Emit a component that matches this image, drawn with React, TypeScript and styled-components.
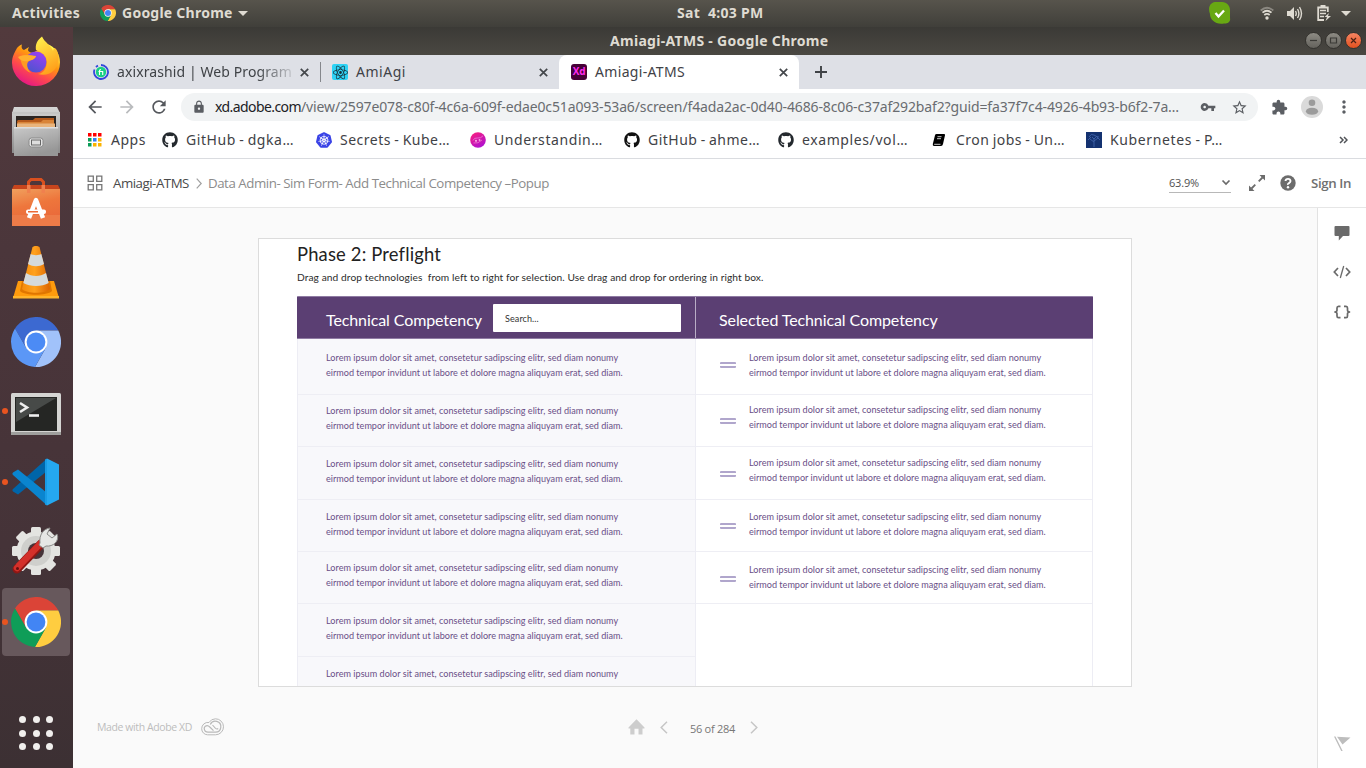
import React from "react";
import styled, { createGlobalStyle } from "styled-components";
import { FaGithub } from "react-icons/fa";
import { SiKubernetes, SiReact } from "react-icons/si";
import {
  MdArrowBack,
  MdArrowForward,
  MdRefresh,
  MdLock,
  MdVpnKey,
  MdStarBorder,
  MdExtension,
  MdMoreVert,
} from "react-icons/md";

const UI = `"Noto Sans", "Open Sans", sans-serif`;
const ADOBE = `"Open Sans", "Noto Sans", sans-serif`;
const NUNITO = `Lato, "Open Sans", sans-serif`;

const GlobalStyle = createGlobalStyle`
  * { box-sizing: border-box; }
  body { margin: 0; font-family: ${UI}; background: #fafafa; }
  svg { display: block; flex: none; }
`;

const Screen = styled.div`
  width: 1366px;
  height: 768px;
  display: flex;
  flex-direction: column;
  overflow: hidden;
`;

/* ---------- desktop top bar ---------- */
const TopBar = styled.header`
  height: 27px;
  flex: none;
  display: grid;
  grid-template-columns: 677px 1fr auto;
  align-items: center;
  padding: 0 15px 1px 0;
  background: linear-gradient(#57544c, #403f3a);
  color: #dfdbd2;
  font-size: 14px;
  line-height: 26px;
  white-space: pre;
`;
const TopLeft = styled.div`
  display: flex;
  align-items: center;
  padding-left: 12px;
`;
const TopText = styled.span<{ $ls: number; $gap?: number }>`
  letter-spacing: ${(p) => p.$ls}px;
  margin-left: ${(p) => p.$gap ?? 0}px;
  font-weight: 700;
`;
const AppMenuIcon = styled.span`
  margin-left: 20px;
`;
const Caret = styled.span<{ $gap: number }>`
  margin-left: ${(p) => p.$gap}px;
  border: 5px solid transparent;
  border-top: 5px solid #dfdbd2;
  border-bottom: 0;
`;
const Tray = styled.div`
  display: flex;
  align-items: center;
`;
const TrayIcon = styled.span<{ $gap: number }>`
  margin-left: ${(p) => p.$gap}px;
`;

/* ---------- dock ---------- */
const Below = styled.div`
  flex: 1;
  display: flex;
  min-height: 0;
`;
const Dock = styled.nav`
  width: 73px;
  flex: none;
  display: flex;
  flex-direction: column;
  align-items: center;
  padding-right: 1px;
  background: linear-gradient(#523a3d 0, #4b363b 30%, #453338 70%, #3c3033 100%);
`;
const DockItem = styled.div<{ $active?: boolean; $running?: boolean; $pt?: number; $pb?: number }>`
  width: 68px;
  height: 68px;
  margin-bottom: 2.1px;
  padding: ${(p) => p.$pt ?? 0}px 0 ${(p) => p.$pb ?? 0}px;
  flex: none;
  display: flex;
  align-items: center;
  justify-content: center;
  border-radius: 4px;
  position: relative;
  background: ${(p) => (p.$active ? "#67585c" : "transparent")};
  &::before {
    content: "";
    display: ${(p) => (p.$running ? "block" : "none")};
    position: absolute;
    left: 0;
    top: 31px;
    width: 6px;
    height: 6px;
    border-radius: 50%;
    background: #e95420;
  }
`;
const AppGrid = styled.div`
  margin: auto 0 18px;
  display: grid;
  grid-template-columns: repeat(3, 7px);
  gap: 6.5px;
`;
const AppGridDot = styled.i`
  height: 7px;
  border-radius: 50%;
  background: #f1efed;
`;

/* ---------- browser window ---------- */
const Browser = styled.main`
  flex: 1;
  min-width: 0;
  display: flex;
  flex-direction: column;
`;
const TitleBar = styled.div`
  height: 28px;
  flex: none;
  display: grid;
  grid-template-columns: 537px 1fr auto;
  align-items: center;
  padding: 0 4px 1px 0;
  background: linear-gradient(#3b3a36, #4a4842);
  color: #dfdbd2;
  font-size: 14px;
  font-weight: 700;
  letter-spacing: 0.3px;
`;
const WindowButtons = styled.div`
  display: flex;
  gap: 3px;
`;
const WindowButton = styled.span<{ $close?: boolean }>`
  width: 17px;
  height: 17px;
  border-radius: 50%;
  display: flex;
  align-items: center;
  justify-content: center;
  border: 1px solid #33322e;
  background: ${(p) =>
    p.$close ? "linear-gradient(#f58462, #e2511f)" : "linear-gradient(#8d8b84, #64625c)"};
`;
const TabStrip = styled.div`
  height: 34px;
  flex: none;
  display: flex;
  background: #dee0e6;
  color: #3f4246;
  font-size: 14px;
`;
const Tab = styled.div<{ $w: number; $pl: number; $active?: boolean }>`
  width: ${(p) => p.$w}px;
  padding: 0 11px 0 ${(p) => p.$pl}px;
  display: flex;
  align-items: center;
  gap: 8px;
  background: ${(p) => (p.$active ? "#fff" : "transparent")};
  border-radius: 8px 8px 0 0;
`;
const TabTitle = styled.span<{ $ls: number; $fade?: boolean }>`
  flex: 1;
  padding-bottom: 2px;
  white-space: nowrap;
  letter-spacing: ${(p) => p.$ls}px;
  mask-image: ${(p) =>
    p.$fade ? "linear-gradient(90deg, #000 140px, rgba(0,0,0,.15) 176px)" : "none"};
`;
const TabDivider = styled.i`
  width: 1px;
  height: 20px;
  align-self: center;
  background: #85878c;
`;
const NewTab = styled.div`
  padding: 11px 0 0 16px;
`;

const Toolbar = styled.div`
  height: 36px;
  flex: none;
  display: flex;
  align-items: center;
  padding: 0 0 0 12px;
  background: #fff;
  color: #5b5e63;
`;
const NavIcon = styled.span<{ $dim?: boolean }>`
  font-size: 20px;
  margin-right: 12px;
  color: ${(p) => (p.$dim ? "#b9bbbd" : "#55585d")};
`;
const AddressBar = styled.div`
  width: 1077px;
  height: 28px;
  border-radius: 14px;
  display: flex;
  align-items: center;
  padding: 0 10px 0 11px;
  background: #f1f3f4;
  font-size: 14px;
  white-space: nowrap;
`;
const UrlHost = styled.span`
  margin-left: 9px;
  width: 86px;
  color: #202124;
  letter-spacing: -0.58px;
  padding-bottom: 1px;
`;
const UrlPath = styled.span`
  flex: 1;
  color: #696c70;
  letter-spacing: -0.133px;
  padding-bottom: 1px;
`;
const AddressIcon = styled.span<{ $size: number; $gap: number }>`
  font-size: ${(p) => p.$size}px;
  margin-left: ${(p) => p.$gap}px;
  color: #5b5e63;
`;

const Bookmarks = styled.div`
  height: 34px;
  flex: none;
  display: flex;
  align-items: center;
  padding: 0 18px 4px 15px;
  background: #fff;
  border-bottom: 1px solid #dadce0;
  color: #3f4246;
  font-size: 14px;
  white-space: nowrap;
`;
const AppsLink = styled.div`
  width: 74px;
  display: flex;
  align-items: center;
  gap: 9px;
  letter-spacing: 0.5px;
`;
const Bookmark = styled.div<{ $ls: number }>`
  width: 154px;
  display: flex;
  align-items: center;
  gap: 8px;
  letter-spacing: ${(p) => p.$ls}px;
  word-spacing: -0.8px;
`;
const Favicon = styled.span<{ $c: string }>`
  width: 16px;
  font-size: 16px;
  color: ${(p) => p.$c};
`;
const More = styled.span`
  margin-left: auto;
`;

/* ---------- prototype viewer ---------- */
const ViewerBar = styled.div`
  height: 49px;
  flex: none;
  display: flex;
  align-items: center;
  padding: 0 15px 0 14px;
  background: #fff;
  border-bottom: 1px solid #e6e6e6;
  font-family: ${ADOBE};
  font-size: 13.3px;
  white-space: nowrap;
`;
const Project = styled.span`
  margin: 0 7px 0 10px;
  width: 76px;
  color: #4a4a4a;
  letter-spacing: -0.49px;
`;
const ScreenName = styled.span`
  margin-left: 6px;
  flex: 1;
  color: #8c8c8c;
  letter-spacing: -0.46px;
`;
const ZoomSelect = styled.div`
  width: 62px;
  height: 19px;
  margin-right: 18px;
  display: flex;
  align-items: center;
  justify-content: space-between;
  border-bottom: 1px solid #b8b8b8;
  color: #505050;
  font-size: 11px;
  letter-spacing: -0.17px;
`;
const SignIn = styled.span`
  margin-left: 15px;
  width: 40px;
  color: #707070;
  font-weight: 600;
  letter-spacing: -0.4px;
`;
const HelpIcon = styled.span`
  margin-left: 15px;
`;
const Viewer = styled.div`
  flex: 1;
  display: flex;
  min-height: 0;
`;
const Stage = styled.section`
  flex: 1;
  display: flex;
  flex-direction: column;
  padding: 30px 0 0 185px;
  background: #fafafa;
`;
const SideRail = styled.aside`
  width: 49px;
  display: flex;
  flex-direction: column;
  align-items: center;
  padding: 17px 0 16px;
  border-left: 1px solid #e2e2e2;
  background: #fff;
`;
const RailIcon = styled.div<{ $gap: number }>`
  margin-top: ${(p) => p.$gap}px;
`;
const RailBottom = styled.div`
  margin-top: auto;
`;
const Artboard = styled.div`
  width: 874px;
  height: 449px;
  flex: none;
  overflow: hidden;
  padding: 0 38px;
  border: 1px solid #dcdcdc;
  background: #fff;
  font-family: ${NUNITO};
`;
const Heading = styled.h1`
  margin: 4px 0 0;
  font-weight: 400;
  font-size: 18.4px;
  line-height: 23px;
  letter-spacing: 0.17px;
  color: #222;
`;
const Hint = styled.p`
  margin: 3px 0 0;
  height: 27px;
  font-size: 10.2px;
  line-height: 16px;
  letter-spacing: 0.08px;
  color: #2c2c2c;
  white-space: pre;
`;
const TableHead = styled.div`
  height: 43px;
  display: flex;
  background: #5b3f73;
  border: 1px solid #8f7ba3;
  border-width: 1px 0;
  border-radius: 1px 1px 0 0;
  color: #fff;
  font-size: 16px;
`;
const HeadCell = styled.div<{ $w: number; $pl: number; $divided?: boolean }>`
  width: ${(p) => p.$w}px;
  padding-left: ${(p) => p.$pl}px;
  padding-top: 3px;
  display: flex;
  align-items: center;
  border-right: ${(p) => (p.$divided ? "1px solid #b9adc6" : "0")};
`;
const HeadText = styled.span<{ $ls: number; $w: number }>`
  width: ${(p) => p.$w}px;
  letter-spacing: ${(p) => p.$ls}px;
  white-space: nowrap;
`;
const SearchBox = styled.div`
  width: 188px;
  height: 28px;
  margin: -2px 0 0 10.500px;
  padding-left: 12.500px;
  display: flex;
  align-items: center;
  border-radius: 1px;
  background: #fff;
  color: #333;
  font-size: 9px;
  letter-spacing: 0.1px;
`;
const Columns = styled.div`
  display: flex;
  height: 420px;
`;
const Column = styled.div<{ $w: number; $tinted?: boolean }>`
  width: ${(p) => p.$w}px;
  background: ${(p) => (p.$tinted ? "#f8f8fb" : "#fff")};
  border: solid #ededf4;
  border-width: 0 1px 0 ${(p) => (p.$tinted ? 1 : 0)}px;
`;
const Row = styled.div<{ $h: number; $pt: number; $pl: number }>`
  height: ${(p) => p.$h}px;
  padding: ${(p) => p.$pt}px 0 0 ${(p) => p.$pl}px;
  display: flex;
  border-bottom: 1px solid #eeeef4;
`;
const Lorem = styled.div`
  margin-top: -1px;
  font-size: 9.1px;
  line-height: 15.4px;
  color: #6a4f87;
  white-space: nowrap;
`;
const Line = styled.div<{ $ls: number }>`
  letter-spacing: ${(p) => p.$ls}px;
`;
const Handle = styled.div<{ $top: number }>`
  width: 16px;
  height: 6px;
  margin: ${(p) => p.$top}px 13px 0 0;
  border: solid #b0a6cc;
  border-width: 2px 0;
  border-radius: 1px;
`;
const Footer = styled.footer`
  display: grid;
  grid-template-columns: 531px auto 1fr;
  align-items: center;
  margin: 28px 0 0 -161px;
  height: 24px;
  font-family: ${ADOBE};
  font-size: 11px;
  white-space: nowrap;
`;
const MadeWith = styled.div`
  display: flex;
  align-items: center;
  color: #bdbdbd;
  font-size: 10.5px;
  letter-spacing: -0.4px;
`;
const MadeWithText = styled.span`
  width: 104px;
`;
const Pager = styled.div`
  display: flex;
  align-items: center;
`;
const PageCount = styled.span`
  margin: 2px 15px 0 22px;
  width: 45px;
  color: #777;
  letter-spacing: -0.28px;
`;
const PrevIcon = styled.span`
  margin-left: 15px;
`;

/* ---------- drawings ---------- */
const Wheel = ({ size, colors, gap = 2 }: { size: number; colors: string[]; gap?: number }) => (
  <svg width={size} height={size} viewBox="0 0 50 50">
    <path d="M25 13.6H47.3A25 25 0 0 0 4 11.5L15.1 30.7Z" fill={colors[0]} />
    <path d="M25 13.6H47.3A25 25 0 0 1 24 50L34.9 30.7Z" fill={colors[1]} />
    <path d="M4 11.5A25 25 0 0 0 24 50L34.9 30.7H15.1Z" fill={colors[2]} />
    <circle cx="25" cy="25" r="11.4" fill="#fff" />
    <circle cx="25" cy="25" r={11.4 - gap} fill={colors[3]} />
  </svg>
);
const CHROME = ["#db4437", "#ffcd40", "#0f9d58", "#4285f4"];
const CHROMIUM = ["#3c69d1", "#a1c2fa", "#5b97f6", "#4c8bf5"];

const Firefox = () => (
  <svg width="50" height="50" viewBox="0 0 50 50">
    <defs>
      <linearGradient id="ffBody" x1=".85" y1=".1" x2=".3" y2="1">
        <stop offset="0" stopColor="#fff44f" />
        <stop offset=".35" stopColor="#ff980e" />
        <stop offset=".65" stopColor="#ff4b4b" />
        <stop offset="1" stopColor="#e31587" />
      </linearGradient>
      <linearGradient id="ffGlobe" x1=".7" y1="0" x2=".2" y2="1">
        <stop offset="0" stopColor="#9a3ff5" />
        <stop offset="1" stopColor="#4a55cc" />
      </linearGradient>
      <linearGradient id="ffTail" x1="0" y1="0" x2=".4" y2="1">
        <stop offset="0" stopColor="#fff44f" />
        <stop offset="1" stopColor="#ffa21c" />
      </linearGradient>
    </defs>
    <path d="M6 12C7 11 9 9 11 8.500C10 11 11 13 13 14L18 11C16 15 17 16 22 17L36 8C45 11 49 19 49 26A24 23.500 0 0 1 1 27C1 20 4 16 6 12Z" fill="url(#ffBody)" />
    <path d="M31 0.500C26 4 24 9 25 14C34 16 38 23 35 31C34 35 30 38 27 38C38 41 46 34 47 26C49 20 46 12 43 12L42 15C40 9 34 7 31 .5Z" fill="url(#ffTail)" />
    <circle cx="25" cy="26" r="10.500" fill="url(#ffGlobe)" />
    <path d="M9 21C14 17 20 20 25 20C24 24 19 24 17 26C15 29 17 34 20 37C12 34 10 27 9 21Z" fill="#ff9a22" />
    <path d="M7 21C14 18 21 20 25 20C24 24 19 24 17 25C12 26 9 24 7 21Z" fill="#ffb02e" />
  </svg>
);
const Files = () => (
  <svg width="50" height="52" viewBox="0 0 50 52">
    <defs>
      <linearGradient id="cab" x1="0" y1="0" x2="0" y2="1">
        <stop offset="0" stopColor="#d6d6d6" />
        <stop offset="1" stopColor="#8b8b8b" />
      </linearGradient>
      <linearGradient id="drawer" x1="0" y1="0" x2=".4" y2="1">
        <stop offset="0" stopColor="#c9c9c9" />
        <stop offset="1" stopColor="#979797" />
      </linearGradient>
    </defs>
    <path d="M3 1H46L49 7V47H1V7Z" fill="url(#cab)" />
    <path d="M1 6H49V8H1Z" fill="#c4c4c4" />
    <path d="M5 10H45V24H5Z" fill="#2b2422" />
    <path d="M7 14H22L24 12H43V23H6V15Z" fill="#b65a1c" />
    <path d="M7 16H30L32 14H43V22H6Z" fill="#d98438" />
    <path d="M6 17.500H44V22H6Z" fill="#e9b47c" />
    <path d="M3 21H47V50H3Z" fill="url(#drawer)" />
    <path d="M3 21H47V22.500H3Z" fill="#dedede" />
    <rect x="18" y="32" width="14" height="9" rx="2.500" fill="#e4e4e4" stroke="#8a8a8a" />
    <rect x="20.500" y="34" width="9" height="5" fill="#ddd" stroke="#666" />
  </svg>
);
const Software = () => (
  <svg width="50" height="50" viewBox="0 0 50 50">
    <defs>
      <linearGradient id="bag" x1="0" y1="0" x2=".3" y2="1">
        <stop offset="0" stopColor="#f0a05e" />
        <stop offset=".5" stopColor="#ee763c" />
        <stop offset="1" stopColor="#e9683a" />
      </linearGradient>
    </defs>
    <path d="M3 8H47L49 12H1Z" fill="#c7451d" />
    <path d="M17.500 13V5L20 2.500H30L32.500 5V13" fill="none" stroke="#d9501f" strokeWidth="3" />
    <path d="M1 12H49V49H1Z" fill="url(#bag)" />
    <path d="M1 38H49V49H1Z" fill="#ed7b48" />
    <path d="M16 8H19.500V16H16ZM30.500 8H34V16H30.500Z" fill="#f0804e" />
    <path d="M18 41L25 23L32 41" fill="none" stroke="#fff" strokeWidth="4.500" strokeLinejoin="round" />
    <rect x="15" y="32.500" width="20" height="4.500" rx="2" fill="#fff" />
    <path d="M17 34H27V35.500H17Z" fill="#ed6b35" />
  </svg>
);
const Vlc = () => (
  <svg width="48" height="54" viewBox="0 0 48 54">
    <defs>
      <linearGradient id="cone" x1="0" x2="1">
        <stop offset="0" stopColor="#f48b0c" />
        <stop offset=".45" stopColor="#ffa11e" />
        <stop offset="1" stopColor="#dc6400" />
      </linearGradient>
    </defs>
    <path d="M6 36H42L47 53H1Z" fill="#ff9b0d" />
    <path d="M1 51H47V53.500H1Z" fill="#ffb52b" />
    <path d="M10 36H38L40 46C35 51 13 51 8 46Z" fill="#e07600" />
    <path d="M20.500 2C22 .5 26 .5 27.500 2L38 44C33 49 15 49 10 44Z" fill="url(#cone)" />
    <path d="M18.700 9C21 10.500 27 10.500 29.300 9L32 19C27 22 21 22 16 19Z" fill="#d5dadc" />
    <path d="M14 28C20 32 28 32 34 28L36.700 38C30 42 18 42 11.300 38Z" fill="#d5dadc" />
  </svg>
);
const Terminal = () => (
  <svg width="50" height="44" viewBox="0 0 50 44">
    <rect x="0" y="1" width="50" height="42" rx="1.500" fill="#d5d5d3" />
    <rect x="0" y="40" width="50" height="3" fill="#9f9f9d" />
    <rect x="4" y="5" width="42" height="34" fill="#252624" />
    <path d="M5 6H45L5 30Z" fill="#474a48" />
    <path d="M9 11L16 15.500L9 20" fill="none" stroke="#eee" strokeWidth="2.600" />
    <path d="M18 23.500H28" stroke="#eee" strokeWidth="2.600" />
  </svg>
);
const VsCode = () => (
  <svg width="48" height="48" viewBox="0 0 48 48">
    <path d="M34.500 1V13.500L6 36.500L1 33.500C0 32.500 .5 31.500 1 31Z" fill="#0065a9" />
    <path d="M34.500 47V34.500L6 11.500L1 14.500C0 15.500 .5 16.500 1 17Z" fill="#0a85cf" />
    <path d="M35 .5L47 6.500V41.500L35 47.500Z" fill="#25a8f0" />
    <path d="M33 1.500L35 .5V47.500L33 46.500Z" fill="#189be5" />
  </svg>
);
const Settings = () => (
  <svg width="50" height="50" viewBox="0 0 50 50">
    <g fill="#e4e4e1">
      {[0, 45, 90, 135].map((a) => (
        <rect key={a} x="20" y="1" width="10" height="48" rx="1.500" transform={`rotate(${a} 25 25)`} />
      ))}
      <circle cx="25" cy="25" r="19.500" />
    </g>
    <circle cx="25" cy="25" r="15" fill="#cfcfcc" />
    <circle cx="25" cy="25" r="8" fill="#463439" />
    <path d="M6 43L30 18" stroke="#8f1714" strokeWidth="9" strokeLinecap="round" />
    <path d="M6 42L30 17" stroke="#d3302a" strokeWidth="6.500" strokeLinecap="round" />
    <path d="M29 17C28 9 32 3 39 2L36 8L41 12L46 8C49 15 42 21 35 20L32 22L28 19Z" fill="#e6e6e4" stroke="#8a8a88" />
    <circle cx="6.500" cy="42.500" r="1.500" fill="#641010" />
  </svg>
);
const Skype = () => (
  <svg width="22" height="22" viewBox="0 0 22 22">
    <path d="M6 0H13C18 0 21 4 21 8V16C22 20 18 22 15 21.500C7 23 1 18 1 12C-1 7 0 1 6 0Z" fill="#68a813" />
    <path d="M6.500 11L9.500 14.500L15 8.500" fill="none" stroke="#fff" strokeWidth="2.300" />
  </svg>
);
const Wifi = () => (
  <svg width="14" height="14" viewBox="0 0 14 14" fill="none" strokeWidth="1.700">
    <path d="M.7 4.500Q7 -1 13.300 4.500" stroke="#8b8881" />
    <path d="M2.500 6.700Q7 2.800 11.500 6.700M4.300 9Q7 6.700 9.700 9" stroke="#dfdbd2" />
    <circle cx="7" cy="12" r="1.700" fill="#dfdbd2" />
  </svg>
);
const Volume = () => (
  <svg width="16" height="15" viewBox="0 0 16 15" fill="none" stroke="#dfdbd2" strokeWidth="1.400">
    <path d="M0 5H3L7 1V14L3 10H0Z" fill="#dfdbd2" stroke="none" />
    <path d="M8.500 5Q10 7.500 8.500 10M10.500 3Q13.300 7.500 10.500 12M12.500 1Q16.500 7.500 12.500 14" />
  </svg>
);
const Battery = () => (
  <svg width="14" height="16" viewBox="0 0 14 16" fill="none" stroke="#dfdbd2">
    <path d="M10.800 7V2.500H1.200V15H7" strokeWidth="1.800" />
    <path d="M3.500 1H8.500" strokeWidth="2" />
    <path d="M3 5.500H9M3 8.500H9M3 11.500H7" strokeWidth="1.500" />
    <path d="M12 8L7.500 12H10L8.500 16L14 11H11Z" fill="#dfdbd2" stroke="none" />
  </svg>
);
const Cross = () => (
  <svg width="9" height="9" viewBox="0 0 9 9" stroke="#44474b" strokeWidth="1.700">
    <path d="M.8 .8L8.200 8.200M8.200 .8L.8 8.200" />
  </svg>
);
const Fiverr = () => (
  <svg width="16" height="16" viewBox="0 0 16 16">
    <path d="M8 1A7 7 0 1 1 1.500 5.500M3 3A7 7 0 0 1 5 1.600" fill="none" stroke="#3347dc" strokeWidth="1.800" />
    <circle cx="8" cy="8" r="5.200" fill="#19cf86" />
    <path d="M6.500 11V6.500Q6.500 5.500 8 5.500M5.500 7.500H9.700V11" fill="none" stroke="#fff" strokeWidth="1.100" />
  </svg>
);
const ReactTile = styled.span`
  width: 16px;
  height: 16px;
  font-size: 15px;
  border-radius: 2px;
  display: flex;
  align-items: center;
  justify-content: center;
  background: #2ed3f5;
  color: #17303a;
`;
const XdTile = styled.span`
  width: 16px;
  height: 16px;
  border-radius: 3px;
  background: #470137;
  color: #ff2bf0;
  font: 700 10px/15px ${ADOBE};
  letter-spacing: -0.3px;
  text-align: center;
`;
const AppsGrid = () => (
  <svg width="14" height="14" viewBox="0 0 14 14">
    {["#f00", "#f00", "#f00", "#0a9d58", "#2f7df6", "#fbb300", "#0a9d58", "#fbb300", "#fbb300"].map((c, i) => (
      <rect key={i} x={(i % 3) * 5} y={Math.floor(i / 3) * 5} width="3.500" height="3.500" fill={c} />
    ))}
  </svg>
);
const PinkBall = () => (
  <svg width="16" height="16" viewBox="0 0 16 16">
    <defs>
      <linearGradient id="pink" x1="0" y1="0" x2=".6" y2="1">
        <stop offset="0" stopColor="#ff1f77" />
        <stop offset="1" stopColor="#b112cf" />
      </linearGradient>
    </defs>
    <circle cx="8" cy="8" r="7.800" fill="url(#pink)" />
    <path d="M3 8.500Q4 5.500 7.500 6T13 3.800M3.500 11Q8 12 12 8" fill="none" stroke="#f07ad6" strokeWidth=".8" />
    <circle cx="6" cy="8.800" r="1.100" fill="#f7a6e4" />
    <circle cx="9.500" cy="8" r=".9" fill="#f7a6e4" />
  </svg>
);
const Book = () => (
  <svg width="14" height="14" viewBox="0 0 14 14">
    <path d="M4.500 1H12Q13.300 1 13 2.300L11 11Q10.600 13 9 13H2Q.5 12.800 .8 11L3 2.300Q3.300 1 4.500 1Z" fill="#000" />
    <path d="M5.500 3.700H9.500M5 5.700H9M2.200 11.300H8.500" stroke="#fff" strokeWidth=".8" fill="none" />
  </svg>
);
const Tree = () => (
  <svg width="16" height="16" viewBox="0 0 16 16">
    <path d="M0 0H16V16H0Z" fill="#143270" />
    <path d="M8 15V6M8 10L4 7M8 9L12 6M3 5Q5 1 8 3T13 5M2 8L5 5M14 8L10 4M6 5L8 7L10 5" stroke="#3f62a8" strokeWidth=".9" fill="none" />
  </svg>
);
const Avatar = () => (
  <svg width="22" height="22" viewBox="0 0 22 22">
    <circle cx="11" cy="11" r="11" fill="#dadada" />
    <circle cx="11" cy="6.700" r="3.300" fill="#9b9b9b" />
    <path d="M4.800 15.500Q5.500 11.800 11 11.800T17.200 15.500Q16 18.800 11 18.800T4.800 15.500Z" fill="#9b9b9b" />
  </svg>
);
const Boards = () => (
  <svg width="16" height="16" viewBox="0 0 16 16" fill="none" stroke="#777" strokeWidth="1.300">
    <path d="M1.200 1.200H6.300V6.300H1.200ZM9.700 1.200H14.800V6.300H9.700ZM1.200 9.700H6.300V14.800H1.200ZM9.700 9.700H14.800V14.800H9.700Z" />
  </svg>
);
const Chevron = ({ w, h, d, c, s }: { w: number; h: number; d: string; c: string; s: number }) => (
  <svg width={w} height={h} viewBox={`0 0 ${w} ${h}`} fill="none" stroke={c} strokeWidth={s}>
    <path d={d} />
  </svg>
);
const Expand = () => (
  <svg width="16" height="16" viewBox="0 0 16 16" fill="none" stroke="#6c6c6c" strokeWidth="1.800">
    <path d="M9.700 6.300L13.500 2.500M2.500 13.500L6.300 9.700" />
    <path d="M10.500 0H16V5.500ZM0 10.500V16H5.500Z" fill="#6c6c6c" stroke="none" />
  </svg>
);
const Help = () => (
  <svg width="16" height="16" viewBox="0 0 16 16">
    <circle cx="8" cy="8" r="7.700" fill="#6c6c6c" />
    <path d="M5.500 6Q5.700 3.900 8 3.900T10.500 6Q10.500 7.200 9 8.100T8 9.900" fill="none" stroke="#fff" strokeWidth="1.900" />
    <circle cx="8" cy="12.200" r="1.200" fill="#fff" />
  </svg>
);
const Cloud = () => (
  <svg width="23" height="18" viewBox="0 0 23 18" fill="none" stroke="#b9b9b9">
    <path d="M6.500 16.800A6 6 0 0 1 .7 10.800A6.200 6.200 0 0 1 8 4.500A7.600 7.600 0 0 1 14.500 .8A8 8 0 0 1 14.500 16.800Z" strokeWidth="1" />
    <path d="M12.500 12.700L8.800 9Q6.500 6.500 4.300 8.300T4.300 13.300Q5.300 14.200 7 14.200H14.500A5.500 5.500 0 1 0 9.300 6.500" strokeWidth="1.200" />
    <path d="M11.500 7L14.500 10.300Q15.800 11.500 17.200 10.500" strokeWidth="1.100" />
  </svg>
);
const Home = () => (
  <svg width="17" height="16" viewBox="0 0 17 16">
    <path d="M8.500 .3L16.500 8.500V9.500H14.500V15.500H10.500V9.700H6.500V15.500H2.300V9.500H.5V8.500Z" fill="#cdcdcd" />
  </svg>
);
const Comment = () => (
  <svg width="16" height="16" viewBox="0 0 16 16">
    <path d="M1.500 1H14.500Q15.500 1 15.500 2V10Q15.500 11 14.500 11H9L4.800 15.500V11H1.500Q.5 11 .5 10V2Q.5 1 1.500 1Z" fill="#6a6a6a" />
  </svg>
);
const Code = () => (
  <svg width="18" height="14" viewBox="0 0 18 14" fill="none" stroke="#6a6a6a" strokeWidth="1.700">
    <path d="M5 3L1.300 7L5 11M13 3L16.700 7L13 11" />
    <path d="M10.700 1L7.300 13" strokeWidth="1.300" />
  </svg>
);
const Braces = () => (
  <svg width="18" height="14" viewBox="0 0 18 14" fill="none" stroke="#6a6a6a" strokeWidth="1.700">
    <path d="M7.500 1.300H5.500Q4 1.300 4 3V5.300Q4 7 1.300 7Q4 7 4 8.700V11Q4 12.700 5.500 12.700H7.500M11 1.300H13Q14.500 1.300 14.500 3V5.300Q14.500 7 17.200 7Q14.500 7 14.500 8.700V11Q14.500 12.700 13 12.700H11" />
  </svg>
);
const Flag = () => (
  <svg width="17" height="16" viewBox="0 0 17 16" fill="#bdbdbd">
    <path d="M0 .5H1.500L8.700 15H7.200ZM3 .8L16.500 1.500L8.500 8.500Z" />
  </svg>
);

/* ---------- content ---------- */
const LEFT_ROWS = [
  { h: 56, pt: 12 },
  { h: 52, pt: 8.5 },
  { h: 53, pt: 9.5 },
  { h: 52, pt: 9.5 },
  { h: 52, pt: 8.5 },
  { h: 53, pt: 9.5 },
  { h: 60, pt: 9.5, single: true },
];
const RIGHT_ROWS = [
  { h: 56, pt: 12, handle: 11 },
  { h: 52, pt: 7.5, handle: 15.5 },
  { h: 53, pt: 9, handle: 15 },
  { h: 52, pt: 10, handle: 13 },
  { h: 52, pt: 10.5, handle: 13.5 },
];

const LoremText = ({ single }: { single?: boolean }) => (
  <Lorem>
    <Line $ls={0.02}>Lorem ipsum dolor sit amet, consetetur sadipscing elitr, sed diam nonumy</Line>
    {!single && (
      <Line $ls={0}>eirmod tempor invidunt ut labore et dolore magna aliquyam erat, sed diam.</Line>
    )}
  </Lorem>
);

const BOOKMARKS = [
  { text: "GitHub - dgka…", ls: 0.55, color: "#24292e", icon: <FaGithub /> },
  { text: "Secrets - Kube…", ls: 0.5, color: "#3a43e6", icon: <SiKubernetes /> },
  { text: "Understandin…", ls: 0.585, color: "#e0218a", icon: <PinkBall /> },
  { text: "GitHub - ahme…", ls: 0.48, color: "#111", icon: <FaGithub /> },
  { text: "examples/vol…", ls: 0.6, color: "#24292e", icon: <FaGithub /> },
  { text: "Cron jobs - Un…", ls: 0.48, color: "#000", icon: <Book /> },
  { text: "Kubernetes - P…", ls: 0.62, color: "#143270", icon: <Tree /> },
];

export default function App() {
  return (
    <Screen>
      <GlobalStyle />
      <TopBar>
        <TopLeft>
          <TopText $ls={0.3}>Activities</TopText>
          <AppMenuIcon>
            <Wheel size={16} colors={CHROME} />
          </AppMenuIcon>
          <TopText $ls={0.24} $gap={6}>Google Chrome</TopText>
          <Caret $gap={5} />
        </TopLeft>
        <TopText $ls={0.3}>{"Sat  4:03 PM"}</TopText>
        <Tray>
          <Skype />
          <TrayIcon $gap={29}><Wifi /></TrayIcon>
          <TrayIcon $gap={13}><Volume /></TrayIcon>
          <TrayIcon $gap={14}><Battery /></TrayIcon>
          <Caret $gap={10} />
        </Tray>
      </TopBar>
      <Below>
        <Dock>
          <DockItem><Firefox /></DockItem>
          <DockItem $pt={2}><Files /></DockItem>
          <DockItem $pt={2}><Software /></DockItem>
          <DockItem $pt={1}><Vlc /></DockItem>
          <DockItem $pt={2}><Wheel size={50} colors={CHROMIUM} /></DockItem>
          <DockItem $running $pt={5}><Terminal /></DockItem>
          <DockItem $running><VsCode /></DockItem>
          <DockItem $pb={2}><Settings /></DockItem>
          <DockItem $active $running><Wheel size={50} colors={CHROME} /></DockItem>
          <AppGrid>
            {Array.from({ length: 9 }, (_, i) => <AppGridDot key={i} />)}
          </AppGrid>
        </Dock>
        <Browser>
          <TitleBar>
            <span />
            <span>Amiagi-ATMS - Google Chrome</span>
            <WindowButtons>
              <WindowButton>
                <Chevron w={9} h={9} d="M1 4.5H8" c="#3b3a36" s={1.2} />
              </WindowButton>
              <WindowButton>
                <Chevron w={9} h={9} d="M1.500 2H7.500V7H1.500Z" c="#3b3a36" s={1.2} />
              </WindowButton>
              <WindowButton $close>
                <Chevron w={9} h={9} d="M2 2L7 7M7 2L2 7" c="#4a2013" s={1.2} />
              </WindowButton>
            </WindowButtons>
          </TitleBar>
          <TabStrip>
            <Tab $w={247} $pl={20}>
              <Fiverr />
              <TabTitle $ls={0.1} $fade>axixrashid | Web Program</TabTitle>
              <Cross />
            </Tab>
            <TabDivider />
            <Tab $w={238} $pl={11}>
              <ReactTile><SiReact /></ReactTile>
              <TabTitle $ls={0.53}>AmiAgi</TabTitle>
              <Cross />
            </Tab>
            <Tab $w={240} $pl={12} $active>
              <XdTile>Xd</XdTile>
              <TabTitle $ls={0.33}>Amiagi-ATMS</TabTitle>
              <Cross />
            </Tab>
            <NewTab>
              <Chevron w={12} h={12} d="M6 0V12M0 6H12" c="#3f4246" s={1.9} />
            </NewTab>
          </TabStrip>
          <Toolbar>
            <NavIcon><MdArrowBack /></NavIcon>
            <NavIcon $dim><MdArrowForward /></NavIcon>
            <NavIcon><MdRefresh /></NavIcon>
            <AddressBar>
              <MdLock size={14} color="#5b5e63" />
              <UrlHost>xd.adobe.com</UrlHost>
              <UrlPath>
                /view/2597e078-c80f-4c6a-609f-edae0c51a093-53a6/screen/f4ada2ac-0d40-4686-8c06-c37af292baf2?guid=fa37f7c4-4926-4b93-b6f2-7a…
              </UrlPath>
              <AddressIcon $size={16} $gap={0}><MdVpnKey /></AddressIcon>
              <AddressIcon $size={17} $gap={15}><MdStarBorder /></AddressIcon>
            </AddressBar>
            <AddressIcon $size={17} $gap={13}><MdExtension /></AddressIcon>
            <AddressIcon $size={22} $gap={13}><Avatar /></AddressIcon>
            <AddressIcon $size={20} $gap={11}><MdMoreVert /></AddressIcon>
          </Toolbar>
          <Bookmarks>
            <AppsLink><AppsGrid />Apps</AppsLink>
            {BOOKMARKS.map((b) => (
              <Bookmark key={b.text} $ls={b.ls}>
                <Favicon $c={b.color}>{b.icon}</Favicon>
                {b.text}
              </Bookmark>
            ))}
            <More>
              <Chevron w={9} h={8} d="M1 1L4 4L1 7M5 1L8 4L5 7" c="#505357" s={1.5} />
            </More>
          </Bookmarks>
          <ViewerBar>
            <Boards />
            <Project>Amiagi-ATMS</Project>
            <Chevron w={6} h={11} d="M.7 .7L5.200 5.500L.7 10.300" c="#a0a0a0" s={1.2} />
            <ScreenName>Data Admin- Sim Form- Add Technical Competency –Popup</ScreenName>
            <ZoomSelect>
              63.9%
              <Chevron w={10} h={7} d="M1.500 1.500L5 5L8.500 1.500" c="#6a6a6a" s={1.7} />
            </ZoomSelect>
            <Expand />
            <HelpIcon><Help /></HelpIcon>
            <SignIn>Sign In</SignIn>
          </ViewerBar>
          <Viewer>
            <Stage>
              <Artboard>
                <Heading>Phase 2: Preflight</Heading>
                <Hint>
                  {"Drag and drop technologies  from left to right for selection. Use drag and drop for ordering in right box."}
                </Hint>
                <TableHead>
                  <HeadCell $w={399} $pl={29} $divided>
                    <HeadText $w={156} $ls={-0.1}>Technical Competency</HeadText>
                    <SearchBox>Search...</SearchBox>
                  </HeadCell>
                  <HeadCell $w={397} $pl={23}>
                    <HeadText $w={220} $ls={-0.1}>Selected Technical Competency</HeadText>
                  </HeadCell>
                </TableHead>
                <Columns>
                  <Column $w={399} $tinted>
                    {LEFT_ROWS.map((r, i) => (
                      <Row key={i} $h={r.h} $pt={r.pt} $pl={28}><LoremText single={r.single} /></Row>
                    ))}
                  </Column>
                  <Column $w={397}>
                    {RIGHT_ROWS.map((r, i) => (
                      <Row key={i} $h={r.h} $pt={r.pt} $pl={24}>
                        <Handle $top={r.handle} />
                        <LoremText />
                      </Row>
                    ))}
                  </Column>
                </Columns>
              </Artboard>
              <Footer>
                <MadeWith>
                  <MadeWithText>Made with Adobe XD</MadeWithText>
                  <Cloud />
                </MadeWith>
                <Pager>
                  <Home />
                  <PrevIcon>
                    <Chevron w={8} h={13} d="M7 .8L1.200 6.500L7 12.200" c="#c6c6c6" s={1.5} />
                  </PrevIcon>
                  <PageCount>56 of 284</PageCount>
                  <Chevron w={8} h={13} d="M1 .8L6.800 6.500L1 12.200" c="#c6c6c6" s={1.5} />
                </Pager>
              </Footer>
            </Stage>
            <SideRail>
              <Comment />
              <RailIcon $gap={24}><Code /></RailIcon>
              <RailIcon $gap={26}><Braces /></RailIcon>
              <RailBottom><Flag /></RailBottom>
            </SideRail>
          </Viewer>
        </Browser>
      </Below>
    </Screen>
  );
}
